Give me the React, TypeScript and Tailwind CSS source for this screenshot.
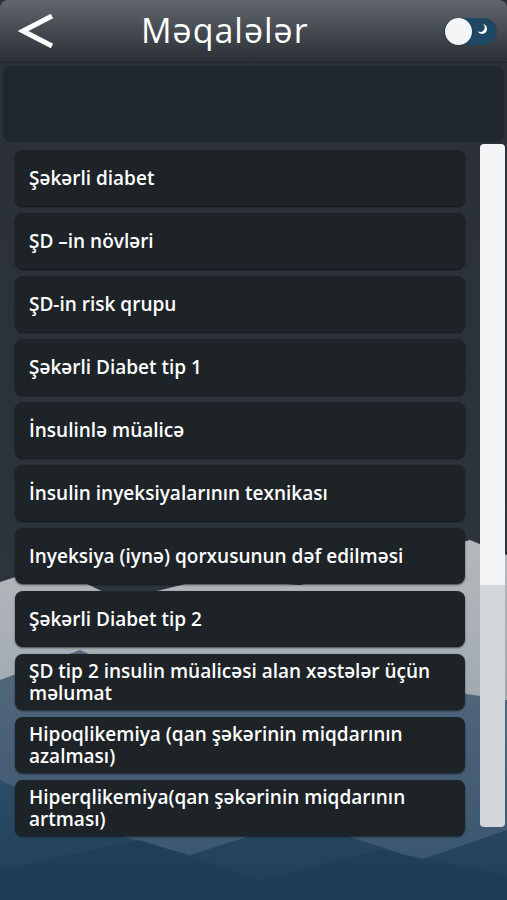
import React from "react";

const articles = [
  "Şəkərli diabet",
  "ŞD –in növləri",
  "ŞD-in risk qrupu",
  "Şəkərli Diabet tip 1",
  "İnsulinlə müalicə",
  "İnsulin inyeksiyalarının texnikası",
  "Inyeksiya (iynə) qorxusunun dəf edilməsi",
  "Şəkərli Diabet tip 2",
  "ŞD tip 2 insulin müalicəsi alan xəstələr üçün məlumat",
  "Hipoqlikemiya (qan şəkərinin miqdarının azalması)",
  "Hiperqlikemiya(qan şəkərinin miqdarının artması)",
];

// background landscape behind the list
function Mountains() {
  return (
    <svg
      className="absolute inset-0"
      width="507"
      height="900"
      viewBox="0 0 507 900"
      preserveAspectRatio="none"
    >
      <defs>
        <linearGradient id="sky" x1="0" y1="0" x2="0" y2="1">
          <stop offset="0" stopColor="#2b3038" />
          <stop offset="0.6" stopColor="#2d333b" />
          <stop offset="1" stopColor="#2f3944" />
        </linearGradient>
        <linearGradient id="far" x1="0" y1="0" x2="0" y2="1">
          <stop offset="0" stopColor="#b4b8bc" />
          <stop offset="1" stopColor="#8a96a2" />
        </linearGradient>
        <linearGradient id="mid" x1="0" y1="0" x2="0" y2="1">
          <stop offset="0" stopColor="#55697d" />
          <stop offset="1" stopColor="#36536d" />
        </linearGradient>
        <linearGradient id="front" x1="0" y1="0" x2="0" y2="1">
          <stop offset="0" stopColor="#2c4c67" />
          <stop offset="1" stopColor="#1f3f58" />
        </linearGradient>
      </defs>
      <rect width="507" height="900" fill="url(#sky)" />
      <polygon
        points="0,582 50,566 120,600 210,578 300,585 400,560 470,540 507,555 507,900 0,900"
        fill="url(#far)"
      />
      <polygon
        points="0,680 80,650 170,690 260,670 350,700 440,690 507,700 507,900 0,900"
        fill="url(#mid)"
      />
      <polygon
        points="0,780 100,830 190,855 300,820 420,860 507,830 507,900 0,900"
        fill="url(#front)"
      />
      <polygon
        points="0,870 140,840 260,880 380,850 507,875 507,900 0,900"
        fill="#1e3c55"
        opacity="0.7"
      />
    </svg>
  );
}

function Toggle() {
  return (
    <div className="relative w-[53px] h-[27px] rounded-full bg-[#1d4762]">
      <div className="absolute left-[1px] top-0 w-[27px] h-[27px] rounded-full bg-[#f4f5f6] shadow" />
      <svg className="absolute right-[9px] top-[5px]" width="12" height="12" viewBox="0 0 12 12">
        <path d="M7 1 A5 5 0 1 1 1.5 8 A4 4 0 0 0 7 1 Z" fill="#ffffff" />
      </svg>
    </div>
  );
}

export default function App() {
  return (
    <div
      className="relative w-[507px] h-[900px] overflow-hidden bg-[#2b3038]"
      style={{ fontFamily: '"Open Sans", "Noto Sans", sans-serif' }}
    >
      <Mountains />
      <div className="relative flex flex-col h-full">
        <header className="h-[63px] flex items-center rounded-t-lg bg-gradient-to-b from-[#62666d] to-[#2b3037] border-b border-[#23282e]">
          <svg className="ml-[18px]" width="37" height="36" viewBox="0 0 37 36">
            <polyline
              points="34,3 5,18 34,33"
              fill="none"
              stroke="#ffffff"
              strokeWidth="5"
              strokeLinejoin="miter"
            />
          </svg>
          <h1 className="ml-[86px] text-[34px] leading-none text-white tracking-[1px] pb-[2px]">
            Məqalələr
          </h1>
          <div className="ml-auto mr-[10px]">
            <Toggle />
          </div>
        </header>
        <div className="mx-[3px] mt-[3px] h-[76px] rounded-lg bg-[#1f262c]" />
        <div className="flex mt-[2px]">
          <div className="ml-[15px] w-[450px] flex flex-col gap-[7px] pt-[6px]">
            {articles.map((t) => (
              <div
                key={t}
                className="h-[56px] rounded-lg bg-[#1e2328] shadow-[0_1px_2px_rgba(0,0,0,0.6)] flex items-center pl-[14px] pr-[20px]"
              >
                <span className="text-white text-[19px] font-semibold leading-[22px]">
                  {t}
                </span>
              </div>
            ))}
          </div>
          <div className="ml-[15px] w-[25px] h-[683px] flex flex-col rounded-sm overflow-hidden">
            <div className="h-[441px] bg-[#f3f4f6]" />
            <div className="flex-1 bg-[#d4d7da]" />
          </div>
        </div>
      </div>
    </div>
  );
}
